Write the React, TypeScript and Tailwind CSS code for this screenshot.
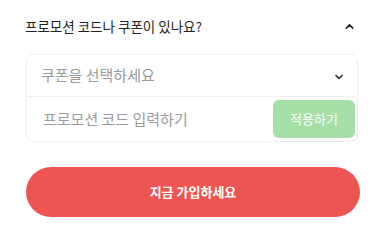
import { ChevronDown, ChevronUp } from "lucide-react";

export default function App() {
    return (
        <div className="w-[377px] h-[229px] bg-white px-[26px] pt-[13px]" style={{ fontFamily: '"Noto Sans CJK KR", "Noto Sans", sans-serif' }}>
            {/* header */}
            <div className="flex items-center justify-between h-[26px] w-[332px]">
                <span className="text-[13.5px] text-[#222] ml-[-1px]">프로모션 코드나 쿠폰이 있나요?</span>
                <ChevronUp className="w-[13px] h-[13px] text-[#222] mr-[2px]" strokeWidth={3} />
            </div>

            {/* coupon card */}
            <div className="mt-[15px] w-[332px] h-[88px] rounded-[8px] border border-[#efefef] flex flex-col">
                <div className="h-[42px] flex items-center justify-between pl-[14px] pr-[12px] border-b border-[#efefef]">
                    <span className="text-[15px] text-[#9a9a9a]">쿠폰을 선택하세요</span>
                    <ChevronDown className="w-[12px] h-[12px] text-[#333] mt-[3px]" strokeWidth={3.5} />
                </div>
                <div className="flex-1 flex items-center justify-between pl-[16px] pr-[2px]">
                    <span className="text-[15px] text-[#9a9a9a]">프로모션 코드 입력하기</span>
                    <button className="w-[82px] h-[38px] rounded-[6px] bg-[#a6dfa6] text-white text-[13px]">적용하기</button>
                </div>
            </div>

            {/* submit */}
            <button className="mt-[25px] w-[334px] h-[50px] rounded-full bg-[#ee5552] text-white text-[13px] font-bold">
                지금 가입하세요
            </button>
        </div>
    );
}
